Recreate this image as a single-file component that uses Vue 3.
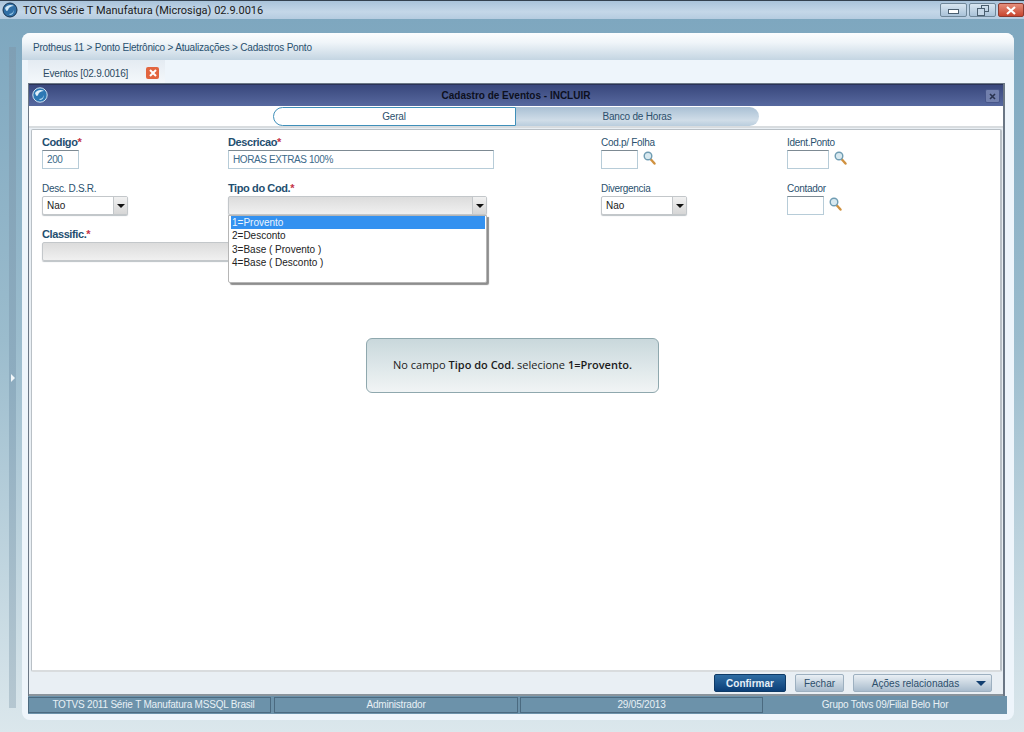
<template>
  <div class="app">
    <header class="titlebar">
      <svg class="logo" width="16" height="16" viewBox="0 0 16 16">
        <circle cx="8" cy="8" r="7" fill="#2f6fa6" stroke="#16324f" stroke-width="1" />
        <path d="M3 6c2-3 6-4 9-2-3 0-5 1-6 4-1 2-2 1-3-2z" fill="#cfe6f5" />
        <path d="M7 12c2 0 4-1 5-4 0 3-2 5-4 5z" fill="#9fd0ee" />
      </svg>
      <span class="app-title">TOTVS Série T Manufatura (Microsiga) 02.9.0016</span>
      <div class="win-buttons">
        <button class="win-btn"><span class="min-glyph"></span></button>
        <button class="win-btn">
          <svg width="12" height="11" viewBox="0 0 12 11" fill="none" stroke="#4a5f70">
            <rect x="4.5" y="0.5" width="7" height="6" />
            <rect x="0.5" y="3.5" width="7" height="7" fill="#c6d8e8" />
          </svg>
        </button>
        <button class="win-btn close">
          <svg width="10" height="9" viewBox="0 0 10 9" stroke="#fff" stroke-width="2.2">
            <path d="M1 1l8 7M9 1l-8 7" />
          </svg>
        </button>
      </div>
    </header>

    <div class="desk">
      <div class="sash"><span class="sash-arrow"></span></div>

      <main class="panel">
        <div class="breadcrumb">Protheus 11 &gt; Ponto Eletrônico &gt; Atualizações &gt; Cadastros Ponto</div>

        <div class="tabstrip">
          <div class="doc-tab">
            <span>Eventos [02.9.0016]</span>
            <span class="doc-close">
              <svg width="8" height="8" viewBox="0 0 8 8" stroke="#fff" stroke-width="2">
                <path d="M1 1l6 6M7 1l-6 6" />
              </svg>
            </span>
          </div>
        </div>

        <section class="dialog">
          <div class="dialog-title">
            <svg class="dialog-logo" width="16" height="16" viewBox="0 0 16 16">
              <circle cx="8" cy="8" r="7.2" fill="#2d78b4" stroke="#cfe3f2" stroke-width="1" />
              <path d="M3 6c2-3 6-4 9-2-3 0-5 1-6 4-1 2-2 1-3-2z" fill="#e2f1fb" />
              <path d="M7 12c2 0 4-1 5-4 0 3-2 5-4 5z" fill="#b6dcf3" />
            </svg>
            <span>Cadastro de Eventos - INCLUIR</span>
            <button class="dialog-x">
              <svg width="7" height="7" viewBox="0 0 7 7" stroke="#2a3350" stroke-width="1.6">
                <path d="M1 1l5 5M6 1l-5 5" />
              </svg>
            </button>
          </div>

          <div class="folders">
            <div class="folder active">Geral</div>
            <div class="folder">Banco de Horas</div>
          </div>

          <div class="form">
            <div class="field-grid">
              <div class="field">
                <label class="req">Codigo<i>*</i></label>
                <div class="input w37">200</div>
              </div>
              <div class="field">
                <label class="req">Descricao<i>*</i></label>
                <div class="input w266">HORAS EXTRAS 100%</div>
              </div>
              <div class="field">
                <label>Cod.p/ Folha</label>
                <div class="with-lookup">
                  <div class="input w37"></div>
                  <svg class="lookup" width="13" height="14" viewBox="0 0 13 14">
                    <path d="M7.5 8l4 4.5" stroke="#d0913f" stroke-width="2.4" stroke-linecap="round" />
                    <circle cx="5" cy="5" r="3.8" fill="#d8e9f0" stroke="#6f9cb2" stroke-width="1.4" />
                  </svg>
                </div>
              </div>
              <div class="field">
                <label>Ident.Ponto</label>
                <div class="with-lookup">
                  <div class="input w42"></div>
                  <svg class="lookup" width="13" height="14" viewBox="0 0 13 14">
                    <path d="M7.5 8l4 4.5" stroke="#d0913f" stroke-width="2.4" stroke-linecap="round" />
                    <circle cx="5" cy="5" r="3.8" fill="#d8e9f0" stroke="#6f9cb2" stroke-width="1.4" />
                  </svg>
                </div>
              </div>

              <div class="field">
                <label>Desc. D.S.R.</label>
                <div class="select w86"><span>Nao</span><b class="drop"></b></div>
              </div>
              <div class="field">
                <label class="req">Tipo do Cod.<i>*</i></label>
                <div class="select open w259"><span></span><b class="drop"></b></div>
                <ul class="dropdown">
                  <li v-for="(opt, i) in tipoOptions" :key="opt" :class="{ selected: i === 0 }">{{ opt }}</li>
                </ul>
              </div>
              <div class="field">
                <label>Divergencia</label>
                <div class="select w86"><span>Nao</span><b class="drop"></b></div>
              </div>
              <div class="field">
                <label>Contador</label>
                <div class="with-lookup">
                  <div class="input w37"></div>
                  <svg class="lookup" width="13" height="14" viewBox="0 0 13 14">
                    <path d="M7.5 8l4 4.5" stroke="#d0913f" stroke-width="2.4" stroke-linecap="round" />
                    <circle cx="5" cy="5" r="3.8" fill="#d8e9f0" stroke="#6f9cb2" stroke-width="1.4" />
                  </svg>
                </div>
              </div>

              <div class="field classific">
                <label class="req">Classific.<i>*</i></label>
                <div class="select open"></div>
              </div>
            </div>

            <div class="hint">
              <span>No campo <strong>Tipo do Cod.</strong> selecione <strong>1=Provento.</strong></span>
            </div>
          </div>

          <div class="actions">
            <button class="btn primary">Confirmar</button>
            <button class="btn">Fechar</button>
            <button class="btn related">Ações relacionadas<span class="related-arrow"></span></button>
          </div>
        </section>

        <footer class="status">
          <div class="cell c1">TOTVS 2011 Série T Manufatura MSSQL Brasil</div>
          <div class="cell c2">Administrador</div>
          <div class="cell c3">29/05/2013</div>
          <div class="cell c4">Grupo Totvs 09/Filial Belo Hor</div>
        </footer>
      </main>
    </div>
  </div>
</template>

<script setup>
const tipoOptions = ['1=Provento', '2=Desconto', '3=Base ( Provento )', '4=Base ( Desconto )']
</script>

<style>
html, body {
  margin: 0;
  background: #cfe0e8;
}
</style>

<style scoped>
.app {
  width: 1024px;
  height: 732px;
  display: flex;
  flex-direction: column;
  overflow: hidden;
  font-family: "Liberation Sans", Arial, sans-serif;
}

.titlebar {
  height: 19px;
  flex: none;
  display: flex;
  align-items: center;
  padding-left: 2px;
  background: linear-gradient(#a9c3da, #c4d7e8 60%, #b5cce0);
  border-top: 1px solid #33414f;
  box-sizing: border-box;
}
.app-title {
  margin-left: 5px;
  font: 11px Roboto, sans-serif;
  color: #1a1a1a;
}
.win-buttons {
  margin-left: auto;
  display: flex;
  gap: 2px;
  align-self: flex-start;
  padding-top: 2px;
}
.win-btn {
  width: 27px;
  height: 14px;
  padding: 0;
  border: 1px solid #6f8799;
  border-radius: 2px;
  background: linear-gradient(#d8e6f1, #a9c2d8);
  display: flex;
  align-items: center;
  justify-content: center;
}
.win-btn.close {
  width: 26px;
  border-color: #8a3a30;
  background: linear-gradient(#e58f7c, #c8452f);
}
.min-glyph {
  width: 9px;
  height: 3px;
  background: #fff;
  border: 1px solid #4a5f70;
  margin-top: 2px;
}

.desk {
  flex: 1;
  min-height: 0;
  display: flex;
  padding: 14px 10px 12px 9px;
  background: linear-gradient(#7ea7bf, #9bbccd 45%, #dbe7ec);
}
.sash {
  width: 7px;
  margin: 14px 6px 12px 0;
  background: linear-gradient(#7f9fb4, #8dacbf 50%, #b5c7d1);
  display: flex;
  align-items: center;
  justify-content: center;
}
.sash-arrow {
  border-left: 4px solid #f2f7fa;
  border-top: 4px solid transparent;
  border-bottom: 4px solid transparent;
}

.panel {
  flex: 1;
  min-width: 0;
  display: flex;
  flex-direction: column;
  background: #eef5fb;
  border-radius: 8px;
  padding: 0 9px 6px 6px;
}
.breadcrumb {
  height: 27px;
  margin: 0 -9px 0 -6px;
  padding-left: 11px;
  line-height: 30px;
  font-size: 10px;
  letter-spacing: -0.2px;
  color: #29506e;
  border-radius: 8px 8px 0 0;
  background: linear-gradient(#fbfdfe, #f0f5f9 35%, #c4d5e2);
}

.tabstrip {
  height: 23px;
  display: flex;
}
.doc-tab {
  width: 137px;
  height: 23px;
  display: flex;
  align-items: center;
  gap: 18px;
  padding: 3px 0 0 15px;
  box-sizing: border-box;
  background: linear-gradient(#e4ebf2, #f4f8fb);
  font-size: 10px;
  letter-spacing: -0.2px;
  white-space: nowrap;
  color: #2c4a62;
}
.doc-close {
  flex: none;
  width: 13px;
  height: 12px;
  border-radius: 2px;
  background: #e2653f;
  display: flex;
  align-items: center;
  justify-content: center;
}

.dialog {
  flex: 1;
  min-height: 0;
  display: flex;
  flex-direction: column;
  border: 1px solid #6b7785;
  border-bottom: 0;
  border-right-width: 2px;
  background: #e9eff4;
  box-sizing: border-box;
}
.dialog-title {
  height: 22px;
  flex: none;
  position: relative;
  display: flex;
  align-items: center;
  justify-content: center;
  background: linear-gradient(#39477c, #57699f);
  border-top: 1px solid #2b3357;
  box-sizing: border-box;
  font-size: 10px;
  font-weight: bold;
  color: #0d1020;
}
.dialog-logo {
  position: absolute;
  left: 3px;
  top: 2px;
}
.dialog-x {
  position: absolute;
  right: 3px;
  top: 4px;
  width: 15px;
  height: 14px;
  padding: 0;
  border: 1px solid #47568a;
  border-radius: 2px;
  background: #7280ad;
  display: flex;
  align-items: center;
  justify-content: center;
}

.folders {
  height: 22px;
  flex: none;
  display: flex;
  justify-content: center;
  align-items: flex-start;
  background: #fff;
  box-sizing: border-box;
  padding: 1px 1px 0 0;
  border-bottom: 2px solid #d8dcdf;
}
.folder {
  width: 243px;
  height: 19px;
  box-sizing: border-box;
  text-align: center;
  line-height: 20px;
  font-size: 10px;
  letter-spacing: -0.2px;
  color: #2c4f6c;
  border-radius: 0 10px 10px 0;
  background: linear-gradient(#a9c0d4, #d0dde8 70%, #b9cddd);
}
.folder.active {
  border-radius: 10px 0 0 10px;
  background: #fff;
  border: 1px solid #3f8fb9;
  line-height: 17px;
}

.form {
  flex: 1;
  min-height: 0;
  position: relative;
  margin: 1px 1px 0 2px;
  background: #fff;
  border: 1px solid #b9c0c6;
  border-bottom-width: 2px;
  border-bottom-color: #d9dcde;
  border-right-width: 2px;
  border-radius: 2px;
}
.field-grid {
  display: grid;
  grid-template-columns: 186px 373px 186px 1fr;
  grid-auto-rows: 46px;
  padding: 6px 0 0 10px;
}
.field {
  position: relative;
}
.field label {
  display: block;
  height: 14px;
  line-height: 14px;
  font-size: 10px;
  letter-spacing: -0.3px;
  color: #2a516e;
}
.field label.req {
  line-height: 12px;
  font-weight: bold;
  font-size: 11px;
  letter-spacing: -0.4px;
  color: #1f4f70;
}
.field label i {
  font-style: normal;
  color: #c4344a;
}
.input {
  height: 19px;
  box-sizing: border-box;
  border: 1px solid #b7ccd8;
  border-top-color: #7d8a93;
  padding-left: 4px;
  line-height: 17px;
  font-size: 10px;
  letter-spacing: -0.4px;
  color: #3d6a8a;
  background: #fff;
}
.w37 { width: 37px; }
.w42 { width: 42px; }
.w266 { width: 266px; }
.w86 { width: 86px; }
.w259 { width: 259px; }
.with-lookup {
  display: flex;
  align-items: center;
  gap: 5px;
}
.lookup {
  margin-top: -3px;
}
.select {
  height: 19px;
  box-sizing: border-box;
  display: flex;
  align-items: center;
  justify-content: space-between;
  border: 1px solid #c3c7ca;
  border-radius: 2px;
  padding-left: 4px;
  font-size: 10px;
  color: #222;
  background: #fff;
  box-shadow: 0 1px 1px #bcc2c6;
}
.select.open {
  background: linear-gradient(#dcdcdc, #f0f0f0);
}
.drop {
  width: 13px;
  height: 17px;
  display: flex;
  align-items: center;
  justify-content: center;
  border-left: 1px solid #c3c7ca;
  background: linear-gradient(#f1f1f1, #d6d6d6);
}
.drop::after {
  content: "";
  border-top: 4px solid #111;
  border-left: 4px solid transparent;
  border-right: 4px solid transparent;
}
.classific {
  grid-column: 1 / 3;
}
.classific .select {
  width: 300px;
}

.dropdown {
  position: absolute;
  z-index: 2;
  left: 0;
  top: 33px;
  width: 259px;
  height: 68px;
  box-sizing: border-box;
  margin: 0;
  padding: 0 1px 0 2px;
  list-style: none;
  background: #fff;
  border: 1px solid #b6b6b6;
  border-radius: 0 0 2px 2px;
  box-shadow: 2px 2px 1px #8d8d8d;
  font-size: 10px;
  color: #222;
}
.dropdown li {
  height: 13.4px;
  line-height: 13px;
  padding-left: 1px;
}
.dropdown li.selected {
  background: #3391f0;
  color: #eaf4ff;
}

.hint {
  position: absolute;
  left: 334px;
  top: 208px;
  width: 293px;
  height: 55px;
  box-sizing: border-box;
  padding-bottom: 3px;
  border: 1px solid #8fa8ae;
  border-radius: 6px;
  background: linear-gradient(#c9d8dc, #dfe8ea 55%, #f1f4f5);
  display: flex;
  align-items: center;
  justify-content: center;
  font: 11px "Open Sans", sans-serif;
  color: #1b1b1b;
}
.hint strong {
  font-weight: 600;
}

.actions {
  height: 24px;
  flex: none;
  display: flex;
  justify-content: flex-end;
  align-items: center;
  gap: 9px;
  padding-right: 11px;
  border-bottom: 2px solid #8a949c;
  box-sizing: border-box;
  background: #e9eff4;
}
.btn {
  height: 18px;
  width: 49px;
  padding: 0;
  border: 1px solid #9db0c0;
  border-radius: 2px;
  background: linear-gradient(#e9eff4, #a9bccd);
  font: 10px "Liberation Sans", Arial, sans-serif;
  color: #2c4f6c;
}
.btn.primary {
  width: 72px;
  border-color: #0e3a66;
  background: linear-gradient(#2f6da3, #0b3f78);
  color: #e6f0f8;
  font-weight: bold;
}
.btn.related {
  width: 139px;
  position: relative;
  padding-right: 14px;
}
.related-arrow {
  position: absolute;
  right: 5px;
  top: 6px;
  border-top: 5px solid #123f70;
  border-left: 5px solid transparent;
  border-right: 5px solid transparent;
}

.status {
  height: 18px;
  flex: none;
  display: flex;
  margin-right: -2px;
  background: #6c92aa;
  padding: 1px 0;
  box-sizing: border-box;
  font-size: 10px;
  letter-spacing: -0.2px;
  color: #e8f0f5;
}
.cell {
  border: 1px solid #4b6a80;
  height: 16px;
  box-sizing: border-box;
  line-height: 14px;
  text-align: center;
}
.c1 { width: 243px; margin-right: 3px; padding-left: 8px; }
.c2 { width: 244px; margin-right: 2px; }
.c3 { width: 243px; }
.c4 { flex: 1; border: 0; line-height: 16px; }
</style>
